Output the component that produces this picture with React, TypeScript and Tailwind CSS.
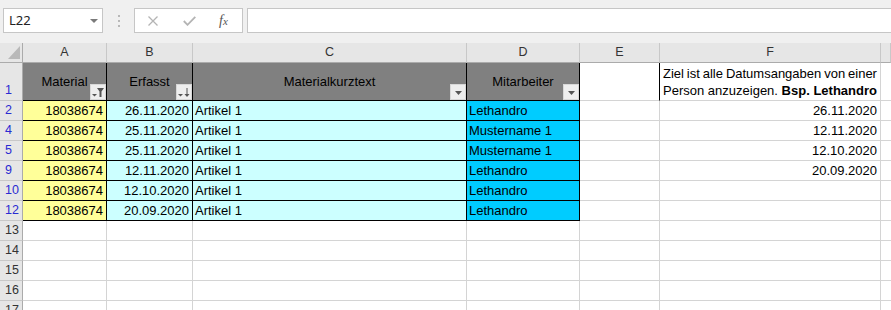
import React from "react";

const W = { rh: 23, A: 84, B: 86, C: 274, D: 113, E: 80, F: 221, G: 10 };

type Row = { n: string; a: string; b: string; d: string; f?: string };
const rows: Row[] = [
  { n: "2", a: "18038674", b: "26.11.2020", d: "Lethandro", f: "26.11.2020" },
  { n: "4", a: "18038674", b: "25.11.2020", d: "Mustername 1", f: "12.11.2020" },
  { n: "5", a: "18038674", b: "25.11.2020", d: "Mustername 1", f: "12.10.2020" },
  { n: "9", a: "18038674", b: "12.11.2020", d: "Lethandro", f: "20.09.2020" },
  { n: "10", a: "18038674", b: "12.10.2020", d: "Lethandro" },
  { n: "12", a: "18038674", b: "20.09.2020", d: "Lethandro" },
];

const hdrFont = { fontFamily: '"Liberation Sans", Arial, sans-serif' };

function Tri({ className = "" }: { className?: string }) {
  return (
    <svg width="7" height="4" viewBox="0 0 7 4" className={className}>
      <polygon points="0,0 7,0 3.5,4" fill="#555" />
    </svg>
  );
}

function FilterBtn({ kind }: { kind: "plain" | "filter" | "sort" }) {
  return (
    <div className="absolute right-0 bottom-0 w-[16px] h-[16px] bg-[#eeeeee] border border-[#d8d8d8] flex items-center justify-center">
      {kind === "plain" && <Tri className="mt-[2px]" />}
      {kind === "filter" && (
        <svg width="14" height="14" viewBox="0 0 14 14">
          <polygon points="1,9 6,9 3.5,11.5" fill="#555" />
          <polygon points="6,3 13,3 10.5,6.5 10.5,12 8.5,12 8.5,6.5" fill="#555" />
        </svg>
      )}
      {kind === "sort" && (
        <svg width="14" height="14" viewBox="0 0 14 14">
          <polygon points="1,9 6,9 3.5,11.5" fill="#555" />
          <rect x="9.5" y="3" width="1" height="8" fill="#555" />
          <polygon points="7.5,9 12.5,9 10,12" fill="#555" />
        </svg>
      )}
    </div>
  );
}

function RowHead({ n, blue, h }: { n: string; blue?: boolean; h: string }) {
  return (
    <div
      className={`w-[23px] ${h} shrink-0 bg-[#e6e6e6] border-r border-r-[#ababab] border-b border-b-[#c8c8c8] flex items-end pl-[5px] pb-[3px] text-[12.5px] leading-[14px] ${blue ? "text-[#2a2ad2]" : "text-[#333]"}`}
      style={hdrFont}
    >
      {n}
    </div>
  );
}

export default function App() {
  return (
    <div
      className="w-[891px] h-[310px] overflow-hidden bg-white text-black"
      style={{ fontFamily: '"Liberation Sans", Arial, sans-serif' }}
    >
      {/* Formula bar */}
      <div className="h-[43px] bg-[#f0f0f0] flex items-start pt-[8px]">
        <div className="ml-[3px] w-[100px] h-[25px] shrink-0 bg-white border border-[#c6c6c6] flex items-center pl-[5px] relative text-[13px] text-[#222]">
          <span style={{ fontFamily: '"Noto Sans", "Open Sans", sans-serif' }}>L22</span>
          <svg width="8" height="4" viewBox="0 0 8 4" className="absolute left-[86px] top-[10px]">
            <polygon points="0,0 8,0 4,4" fill="#7a7a7a" />
          </svg>
        </div>
        <div className="w-[31px] h-[25px] shrink-0 flex flex-col items-center justify-center gap-[3px]">
          <div className="w-[2px] h-[2px] bg-[#b8b8b8]" />
          <div className="w-[2px] h-[2px] bg-[#b8b8b8]" />
          <div className="w-[2px] h-[2px] bg-[#b8b8b8]" />
        </div>
        <div className="w-[109px] h-[25px] shrink-0 bg-white border border-[#c6c6c6] flex items-center">
          <svg width="10" height="10" viewBox="0 0 10 10" className="ml-[13px]">
            <path d="M0.5 0.5 L9.5 9.5 M9.5 0.5 L0.5 9.5" stroke="#b4b4b4" strokeWidth="1.3" />
          </svg>
          <svg width="13" height="10" viewBox="0 0 13 10" className="ml-[25px]">
            <path d="M0.8 5 L4.5 8.8 L12.3 0.8" stroke="#b4b4b4" strokeWidth="1.8" fill="none" />
          </svg>
          <span
            className="ml-[23px] text-[14px] italic text-[#555] leading-none"
            style={{ fontFamily: '"Liberation Serif", "DejaVu Serif", serif' }}
          >
            f<span className="text-[11px]">x</span>
          </span>
        </div>
        <div className="ml-[4px] flex-1 h-[25px] bg-white border-t border-b border-l border-[#c6c6c6]" />
      </div>

      {/* Column headers */}
      <div className="flex h-[20px]" style={hdrFont}>
        <div className="w-[23px] shrink-0 bg-[#e6e6e6] border-r border-r-[#ababab] border-b border-b-[#ababab] relative">
          <svg width="23" height="19" viewBox="0 0 23 19" className="absolute left-0 top-0">
            <polygon points="8,16 20,16 20,3" fill="#b9b9b9" />
          </svg>
        </div>
        {(
          [
            ["A", W.A],
            ["B", W.B],
            ["C", W.C],
            ["D", W.D],
            ["E", W.E],
            ["F", W.F],
            ["", W.G],
          ] as [string, number][]
        ).map(([l, w]) => (
          <div
            key={l + w}
            className="shrink-0 bg-[#e6e6e6] border-r border-r-[#c8c8c8] border-b border-b-[#ababab] flex items-center justify-center text-[12.5px] text-[#333]"
            style={{ width: w }}
          >
            {l}
          </div>
        ))}
      </div>

      {/* Row 1 */}
      <div className="flex h-[38px] text-[13px]">
        <RowHead n="1" blue h="h-[38px]" />
        <div className="w-[84px] shrink-0 bg-[#808080] border-r border-b border-black relative flex items-center justify-center">
          <span>Material</span>
          <FilterBtn kind="filter" />
        </div>
        <div className="w-[86px] shrink-0 bg-[#808080] border-r border-b border-black relative flex items-center justify-center">
          <span>Erfasst</span>
          <FilterBtn kind="sort" />
        </div>
        <div className="w-[274px] shrink-0 bg-[#808080] border-r border-b border-black relative flex items-center justify-center">
          <span>Materialkurztext</span>
          <FilterBtn kind="plain" />
        </div>
        <div className="w-[113px] shrink-0 bg-[#808080] border-r border-b border-black relative flex items-center justify-center">
          <span>Mitarbeiter</span>
          <FilterBtn kind="plain" />
        </div>
        <div className="w-[80px] shrink-0 border-r border-r-black border-b border-b-[#d4d4d4]" />
        <div className="w-[221px] shrink-0 border-r border-b border-[#d4d4d4] flex flex-col justify-end pl-[3px] pr-[3px] pb-[1px] text-[13px] leading-[17px] whitespace-nowrap">
          <div className="flex justify-between">
            <span>Ziel</span>
            <span>ist</span>
            <span>alle</span>
            <span>Datumsangaben</span>
            <span>von</span>
            <span>einer</span>
          </div>
          <div className="flex justify-between">
            <span>Person</span>
            <span>anzuzeigen.</span>
            <b>Bsp.</b>
            <b>Lethandro</b>
          </div>
        </div>
        <div className="w-[10px] shrink-0 border-b border-[#d4d4d4]" />
      </div>

      {/* Data rows */}
      {rows.map((r) => (
        <div key={r.n} className="flex h-[20px] text-[13px] leading-[16px]">
          <RowHead n={r.n} blue h="h-[20px]" />
          <div className="w-[84px] shrink-0 bg-[#ffff99] border-r border-b border-black flex items-end justify-end pr-[3px] pb-[1px]">
            {r.a}
          </div>
          <div className="w-[86px] shrink-0 bg-[#ccffff] border-r border-b border-black flex items-end justify-end pr-[3px] pb-[1px]">
            {r.b}
          </div>
          <div className="w-[274px] shrink-0 bg-[#ccffff] border-r border-b border-black flex items-end pl-[2px] pb-[1px]">
            Artikel 1
          </div>
          <div className="w-[113px] shrink-0 bg-[#00ccff] border-r border-b border-black flex items-end pl-[2px] pb-[1px]">
            {r.d}
          </div>
          <div className="w-[80px] shrink-0 border-r border-b border-[#d4d4d4]" />
          <div className="w-[221px] shrink-0 border-r border-b border-[#d4d4d4] flex items-end justify-end pr-[3px] pb-[1px]">
            {r.f ?? ""}
          </div>
          <div className="w-[10px] shrink-0 border-b border-[#d4d4d4]" />
        </div>
      ))}

      {/* Empty rows */}
      {["13", "14", "15", "16", "17"].map((n) => (
        <div key={n} className="flex h-[20px]">
          <RowHead n={n} h="h-[20px]" />
          {[W.A, W.B, W.C, W.D, W.E, W.F].map((w, i) => (
            <div key={i} className="shrink-0 border-r border-b border-[#d4d4d4]" style={{ width: w }} />
          ))}
          <div className="w-[10px] shrink-0 border-b border-[#d4d4d4]" />
        </div>
      ))}
    </div>
  );
}
